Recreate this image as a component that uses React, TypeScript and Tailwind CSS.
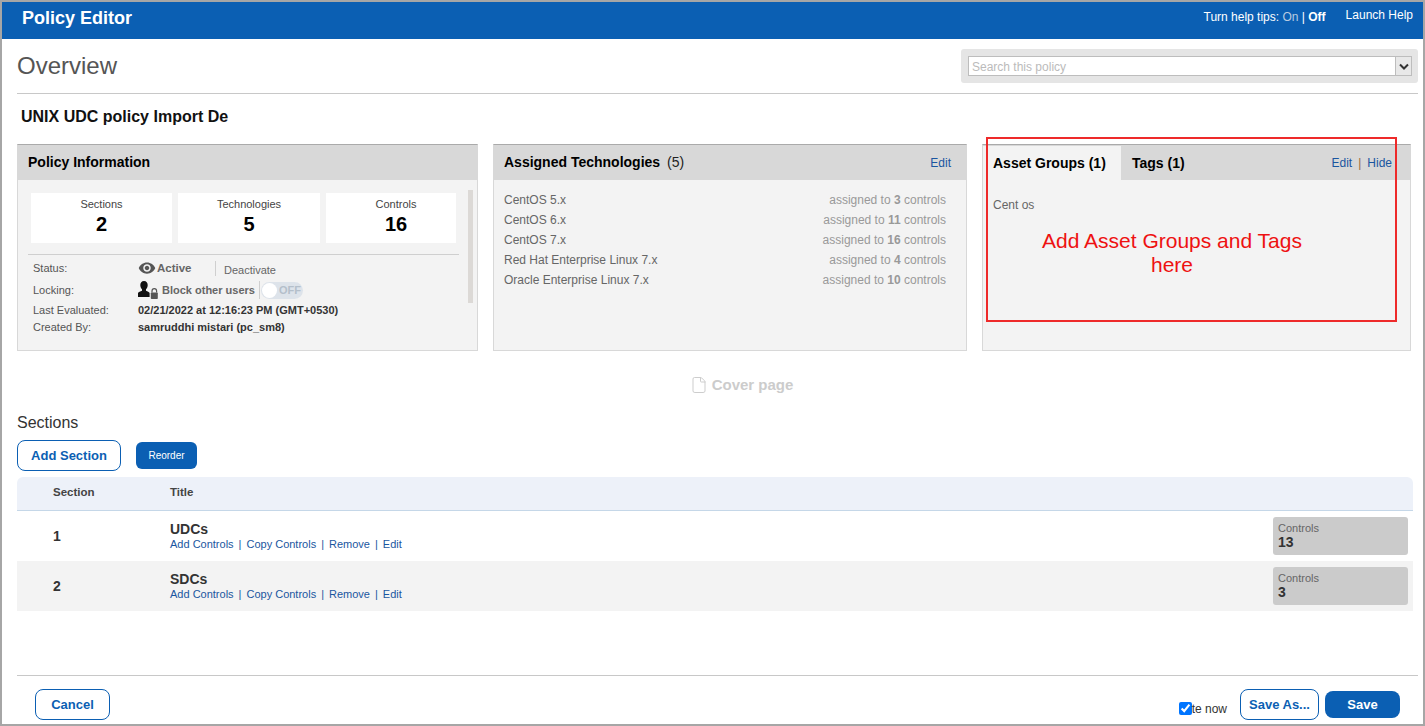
import { File } from 'lucide-react';

const technologies = [
  { name: 'CentOS 5.x', count: 3 },
  { name: 'CentOS 6.x', count: 11 },
  { name: 'CentOS 7.x', count: 16 },
  { name: 'Red Hat Enterprise Linux 7.x', count: 4 },
  { name: 'Oracle Enterprise Linux 7.x', count: 10 },
];

const sections = [
  { id: 1, title: 'UDCs', controls: 13 },
  { id: 2, title: 'SDCs', controls: 3 },
];

function EyeIcon() {
  return (
    <svg width="18" height="18" viewBox="0 0 24 24" fill="#555555" className="mr-px">
      <path d="M12 4.5C7 4.5 2.73 7.61 1 12c1.73 4.39 6 7.5 11 7.5s9.27-3.11 11-7.5c-1.73-4.39-6-7.5-11-7.5zM12 17c-2.76 0-5-2.24-5-5s2.24-5 5-5 5 2.24 5 5-2.24 5-5 5zm0-8c-1.66 0-3 1.34-3 3s1.34 3 3 3 3-1.34 3-3-1.34-3-3-3z" />
    </svg>
  );
}

function LockedUserIcon() {
  return (
    <svg width="20" height="18" viewBox="0 0 20 18" className="mr-[4px]">
      <path d="M6 0c2.4 0 3.7 1.8 3.7 4 0 1.8-.7 3.3-1.7 4.3v1.4c1.6.6 3 1.2 3.6 2.2V16H0v-4.1c.7-1 2.2-1.6 4-2.2V8.300C3 7.300 2.300 5.800 2.300 4 2.300 1.800 3.600 0 6 0z" fill="#111111" />
      <path d="M14 11.500V10a2.300 2.300 0 0 1 4.600 0v1.500" fill="none" stroke="#555555" strokeWidth="1.200" />
      <rect x="12.800" y="11.500" width="7" height="6.500" rx="0.800" fill="#555555" />
    </svg>
  );
}

function Stat({ label, value, className }: { label: string; value: number; className: string }) {
  return (
    <div className={`flex h-[50px] flex-col items-center bg-white pt-[4px] ${className}`}>
      <span className="text-[11px] leading-[14px] text-[#444]">{label}</span>
      <span className="mt-px text-[20px] leading-[24px] font-bold text-black">{value}</span>
    </div>
  );
}

function LinkSep() {
  return <span className="mx-[5px] text-[#1a56a0]">|</span>;
}

export default function App() {
  return (
    <div className="relative flex h-[726px] w-[1425px] flex-col border-2 border-[#a6a6a6] bg-white font-['Liberation_Sans',Arial,sans-serif]">
      <header className="flex h-[37px] shrink-0 bg-[#0b5fb3] text-white">
        <h1 className="pt-[5px] pl-[20px] text-[18px] leading-[22px] font-bold">Policy Editor</h1>
        <div className="ml-auto pt-[8px] text-[12px] leading-[14px]">
          Turn help tips: <span className="text-[#b9cbe0]">On</span> | <span className="font-bold">Off</span>
        </div>
        <div className="mr-[10px] ml-[20px] pt-[6px] text-[12px] leading-[14px]">Launch Help</div>
      </header>

      <main className="flex min-h-0 flex-1 flex-col pr-[5px] pl-[15px]">
        <div className="flex h-[55px] shrink-0 items-start justify-between border-b border-[#c8c8c8]">
          <h2 className="pt-[12px] text-[24px] leading-[30px] text-[#555]">Overview</h2>
          <div className="mt-[10px] flex h-[34px] w-[457px] items-center rounded-[3px] bg-[#e5e5e5] pr-[6px] pl-[7px]">
            <div className="flex h-[20px] flex-1 border border-[#bdbdbd] bg-white">
              <span className="flex-1 pt-px pl-[3px] text-[12px] leading-[18px] text-[#bbb]">Search this policy</span>
              <span className="flex w-[16px] items-center justify-center border-l border-[#bdbdbd] bg-[#e8e8e8]">
                <svg width="10" height="7" viewBox="0 0 10 7">
                  <path d="M1 1.500l4 4 4-4" fill="none" stroke="#333" strokeWidth="2" />
                </svg>
              </span>
            </div>
          </div>
        </div>

        <div className="h-[50px] shrink-0 pt-[13px] pl-[4px] text-[16px] leading-[20px] font-bold text-[#111]">
          UNIX UDC policy Import De
        </div>

        <div className="flex h-[207px] shrink-0 gap-[15px]">
          <section className="flex w-[461px] flex-col border border-t-[#aaa] border-r-[#d8d8d8] border-b-[#d8d8d8] border-l-[#d8d8d8] bg-[#f3f3f3]">
            <div className="flex h-[35px] shrink-0 items-center bg-[#d8d8d8] pl-[10px] text-[14px] font-bold text-black">
              Policy Information
            </div>
            <div className="flex flex-1">
              <div className="ml-[10px] w-[431px]">
                <div className="flex gap-[6px] border-b border-[#cfcfcf] pt-[13px] pb-[11px] pl-[3px]">
                  <Stat label="Sections" value={2} className="w-[141px]" />
                  <Stat label="Technologies" value={5} className="w-[142px]" />
                  <Stat label="Controls" value={16} className="w-[130px] pl-[10px]" />
                </div>
                <div className="pl-[5px] text-[11px] text-[#555]">
                  <div className="flex h-[24px] items-center pt-[2px]">
                    <span className="w-[105px]">Status:</span>
                    <EyeIcon />
                    <span className="w-[58px] pt-px text-[11.5px] font-bold text-[#666]">Active</span>
                    <span className="h-[15px] border-l border-[#cfcfcf] pl-[8px] leading-[18px] text-[#666]">Deactivate</span>
                  </div>
                  <div className="flex h-[22px] items-center">
                    <span className="w-[105px]">Locking:</span>
                    <LockedUserIcon />
                    <span className="font-bold text-[#666]">Block other users</span>
                    <span className="ml-[4px] flex h-[18px] items-center border-l border-[#cfcfcf] pl-[1px]">
                      <span className="flex h-[17px] w-[42px] items-center rounded-full bg-[#dde3ea] pl-[1px]">
                        <span className="h-[15px] w-[15px] rounded-full bg-white" />
                        <span className="ml-[2px] text-[11px] font-bold text-[#b4bfca]">OFF</span>
                      </span>
                    </span>
                  </div>
                  <div className="flex h-[18px] items-center">
                    <span className="w-[105px]">Last Evaluated:</span>
                    <span className="font-bold text-[#333]">02/21/2022 at 12:16:23 PM (GMT+0530)</span>
                  </div>
                  <div className="flex h-[16px] items-center">
                    <span className="w-[105px]">Created By:</span>
                    <span className="font-bold text-[#333]">samruddhi mistari (pc_sm8)</span>
                  </div>
                </div>
              </div>
              <div className="mt-[10px] ml-[9px] h-[113px] w-[5px] bg-[#dcd9d6]" />
            </div>
          </section>

          <section className="flex w-[474px] flex-col border border-t-[#aaa] border-r-[#d8d8d8] border-b-[#d8d8d8] border-l-[#d8d8d8] bg-[#f3f3f3]">
            <div className="flex h-[35px] shrink-0 items-center justify-between bg-[#d8d8d8] pr-[15px] pl-[10px]">
              <span className="text-[14px] font-bold text-black">
                Assigned Technologies <span className="ml-[3px] font-normal text-[#222]">(5)</span>
              </span>
              <span className="text-[12px] text-[#1a56a0]">Edit</span>
            </div>
            <ul className="pt-[10px] pr-[20px] pl-[10px] text-[12px]">
              {technologies.map((tech) => (
                <li key={tech.name} className="flex h-[20px] items-center justify-between">
                  <span className="text-[#666]">{tech.name}</span>
                  <span className="text-[#999]">
                    assigned to <b>{tech.count}</b> controls
                  </span>
                </li>
              ))}
            </ul>
          </section>

          <section className="flex w-[429px] flex-col border border-t-[#aaa] border-r-[#d8d8d8] border-b-[#d8d8d8] border-l-[#d8d8d8] bg-[#f3f3f3]">
            <div className="flex h-[35px] shrink-0 items-end bg-[#d8d8d8] pr-[18px] text-[14px] font-bold text-black">
              <div className="flex h-[34px] w-[138px] items-center bg-[#f3f3f3] pl-[10px]">Asset Groups (1)</div>
              <div className="flex h-[34px] items-center pl-[11px]">Tags (1)</div>
              <div className="ml-auto flex h-[34px] items-center text-[12px] font-normal text-[#1a56a0]">
                Edit <span className="mx-[6px] text-[#9a6a3a]">|</span> Hide
              </div>
            </div>
            <div className="pt-[18px] pl-[10px] text-[12px] leading-[14px] text-[#666]">Cent os</div>
            <div className="mt-[17px] ml-[44px] w-[290px] text-center text-[21px] leading-[24px] text-[#ee1111]">
              Add Asset Groups and Tags here
            </div>
          </section>
        </div>

        <div className="mt-[24px] flex h-[20px] shrink-0 items-center justify-center gap-[4px] pl-[48px] text-[15px] font-bold text-[#cccccc]">
          <File size={18} strokeWidth={1.3} />
          Cover page
        </div>

        <h3 className="mt-[19px] shrink-0 text-[16px] leading-[18px] text-[#333]">Sections</h3>

        <div className="mt-[8px] flex h-[31px] shrink-0 items-center gap-[15px]">
          <button className="h-[31px] w-[104px] rounded-[8px] border border-[#0b5fb3] bg-white text-[13px] font-bold text-[#0b5fb3]">
            Add Section
          </button>
          <button className="h-[27px] w-[61px] rounded-[6px] bg-[#0b5fb3] text-[10px] text-white">Reorder</button>
        </div>

        <div className="mt-[6px] w-[1396px] shrink-0">
          <div className="flex h-[34px] items-center rounded-t-[6px] border-b border-[#c5d7e8] bg-[#edf1f9] pb-[2px] text-[11.5px] font-bold text-[#444]">
            <span className="w-[153px] pl-[36px]">Section</span>
            <span>Title</span>
          </div>
          {sections.map((section) => (
            <div
              key={section.id}
              className={`flex h-[50px] items-center pr-[5px] ${section.id === 2 ? 'bg-[#f3f3f3]' : 'bg-white'}`}
            >
              <span className="w-[153px] pl-[36px] text-[14px] font-bold text-[#333]">{section.id}</span>
              <div className="flex-1">
                <div className="text-[14px] leading-[16px] font-bold text-[#333]">{section.title}</div>
                <div className="text-[11px] leading-[14px] text-[#1a56a0]">
                  Add Controls
                  <LinkSep />
                  Copy Controls
                  <LinkSep />
                  Remove
                  <LinkSep />
                  Edit
                </div>
              </div>
              <div className="h-[38px] w-[135px] rounded-[3px] bg-[#cbcbcb] pt-[5px] pl-[5px]">
                <div className="text-[11px] leading-[12px] text-[#666]">Controls</div>
                <div className="text-[14px] leading-[16px] font-bold text-[#333]">{section.controls}</div>
              </div>
            </div>
          ))}
        </div>

        <footer className="mt-auto flex h-[49px] shrink-0 items-start border-t border-[#c8c8c8] pt-[13px] pr-[18px] pl-[18px]">
          <button className="h-[31px] w-[75px] rounded-[8px] border border-[#0b5fb3] bg-white text-[13px] font-bold text-[#0b5fb3]">
            Cancel
          </button>
          <label className="mt-[11px] ml-auto flex items-center text-[12px] leading-[14px] text-[#333]">
            <input type="checkbox" checked readOnly className="m-0 h-[13px] w-[13px] accent-[#0075ff]" />
            <span className="pt-[2px]">te now</span>
          </label>
          <button className="ml-[13px] h-[31px] w-[79px] rounded-[8px] border border-[#0b5fb3] bg-white text-[13px] font-bold text-[#0b5fb3]">
            Save As...
          </button>
          <button className="mt-[2px] ml-[6px] h-[27px] w-[75px] rounded-[8px] bg-[#0b5fb3] text-[13px] font-bold text-white">
            Save
          </button>
        </footer>
      </main>

      {/* annotation drawn over the screenshot */}
      <div className="absolute top-[135px] left-[984px] h-[185px] w-[411px] border-2 border-[#ee2a2a]" />
    </div>
  );
}
